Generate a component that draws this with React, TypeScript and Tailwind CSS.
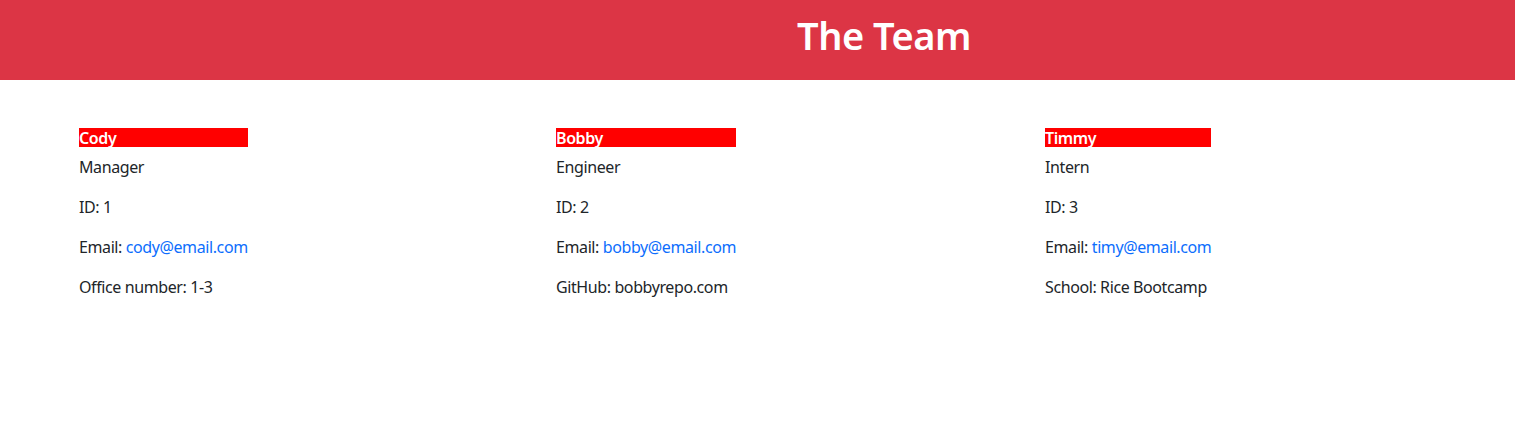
import React from 'react';

type Member = {
    name: string;
    role: string;
    id: number;
    email: string;
    extraLabel: string;
    extraValue: string;
    colWidth: string;
};

const team: Member[] = [
    { name: 'Cody', role: 'Manager', id: 1, email: 'cody@email.com', extraLabel: 'Office number', extraValue: '1-3', colWidth: 'w-[477px]' },
    { name: 'Bobby', role: 'Engineer', id: 2, email: 'bobby@email.com', extraLabel: 'GitHub', extraValue: 'bobbyrepo.com', colWidth: 'w-[489px]' },
    { name: 'Timmy', role: 'Intern', id: 3, email: 'timy@email.com', extraLabel: 'School', extraValue: 'Rice Bootcamp', colWidth: 'w-[300px]' },
];

function MemberCard({ m }: { m: Member }) {
    return (
        <div className={`${m.colWidth} shrink-0`}>
            <div className="w-fit">
                <h6 className="bg-[#ff0000] text-white font-semibold text-[16px] leading-[17px] pt-[2px] mb-2">{m.name}</h6>
                <p className="mb-4">{m.role}</p>
                <p className="mb-4">ID: {m.id}</p>
                <p className="mb-4">
                    Email: <a href={`mailto:${m.email}`} className="text-[#0d6efd]">{m.email}</a>
                </p>
                <p className="mb-4">{m.extraLabel}: {m.extraValue}</p>
            </div>
        </div>
    );
}

export default function App() {
    return (
        <div className="min-h-[439px] bg-white text-[#212529] text-[16px] leading-[1.5] tracking-[-0.4px] font-['Noto_Sans',sans-serif]">
            {/* HEADER */}
            <header className="h-20 bg-[#dc3545] flex items-center justify-center pl-[253px] pb-2">
                <h1 className="text-[38px] leading-[1.2] tracking-[-0.5px] font-semibold text-white">The Team</h1>
            </header>

            {/* TEAM CARDS */}
            <main className="flex pl-[79px] pt-12">
                {team.map((m) => (
                    <MemberCard key={m.name} m={m} />
                ))}
            </main>
        </div>
    );
}
